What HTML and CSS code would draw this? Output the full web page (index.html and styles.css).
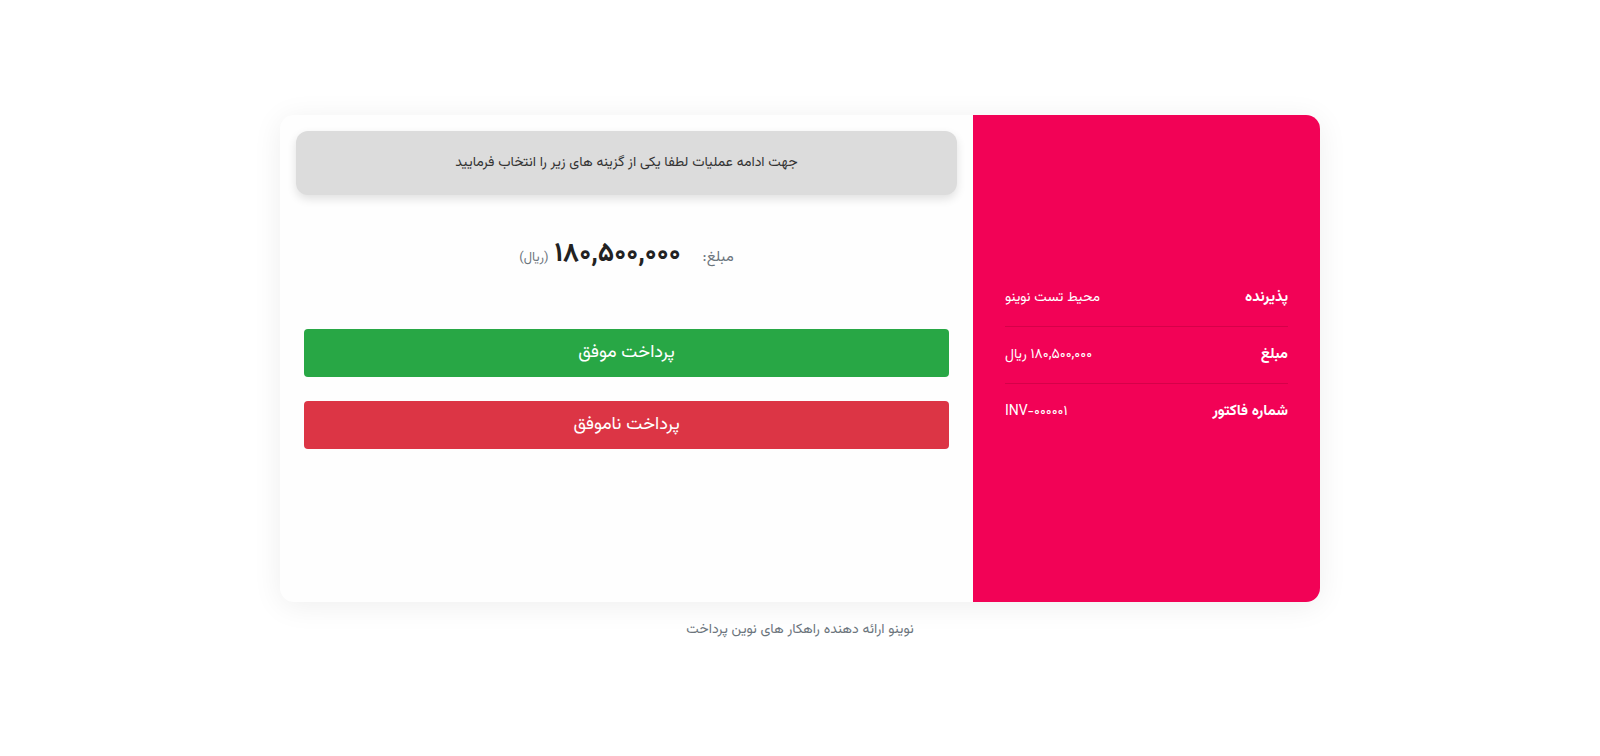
FILE: index.html
```html
<!DOCTYPE html>
<html lang="fa" dir="rtl">
<head>
<meta charset="utf-8">
<title>پرداخت</title>
<link rel="stylesheet" href="styles.css">
</head>
<body>
<div class="page">
  <div class="card">
    <aside class="info">
      <div class="info-row">
        <span class="info-label">پذیرنده</span>
        <span class="info-value">محیط تست نوینو</span>
      </div>
      <div class="info-row">
        <span class="info-label">مبلغ</span>
        <span class="info-value">۱۸۰,۵۰۰,۰۰۰ ریال</span>
      </div>
      <div class="info-row">
        <span class="info-label">شماره فاکتور</span>
        <span class="info-value" dir="ltr">INV-۰۰۰۰۰۱</span>
      </div>
    </aside>
    <main class="main">
      <div class="notice">جهت ادامه عملیات لطفا یکی از گزینه های زیر را انتخاب فرمایید</div>
      <div class="amount">
        <span class="amount-label">مبلغ:</span>
        <span class="amount-value">۱۸۰,۵۰۰,۰۰۰</span>
        <span class="amount-unit">(ریال)</span>
      </div>
      <div class="actions">
        <button class="btn btn-success" type="button">پرداخت موفق</button>
        <button class="btn btn-danger" type="button">پرداخت ناموفق</button>
      </div>
    </main>
  </div>
  <p class="footer">نوینو ارائه دهنده راهکار های نوین پرداخت</p>
</div>
</body>
</html>
```
FILE: styles.css
```css
* { box-sizing: border-box; }
html, body {
  margin: 0;
  padding: 0;
  background: #ffffff;
}
body {
  font-family: "Vazirmatn", "Noto Sans Arabic", "DejaVu Sans", sans-serif;
  color: #333;
}
.page {
  display: flex;
  flex-direction: column;
  align-items: center;
  padding-top: 115px;
}
.card {
  width: 1040px;
  height: 487px;
  display: flex;
  background: #fefefe;
  border-radius: 14px;
  box-shadow: 0 4px 30px rgba(0, 0, 0, 0.07);
}
.info {
  width: 347px;
  flex: none;
  background: #f20256;
  border-radius: 0 14px 14px 0;
  padding: 0 32px 7px;
  display: flex;
  flex-direction: column;
  justify-content: center;
  color: #fff;
}
.info-row {
  display: flex;
  justify-content: space-between;
  align-items: center;
  padding: 16px 0;
  line-height: 24px;
}
.info-row + .info-row {
  border-top: 1px solid rgba(160, 0, 50, 0.35);
}
.info-label {
  font-weight: 700;
  font-size: 15px;
}
.info-value {
  font-size: 14px;
}
.main {
  flex: 1;
  padding: 16px;
  display: flex;
  flex-direction: column;
}
.notice {
  height: 64px;
  background: #dcdcdc;
  border-radius: 12px;
  box-shadow: 0 4px 10px rgba(0, 0, 0, 0.12);
  display: flex;
  align-items: center;
  justify-content: center;
  font-size: 14px;
  color: #333;
}
.amount {
  margin-top: 38px;
  display: flex;
  justify-content: center;
  align-items: baseline;
  gap: 6px;
  height: 36px;
}
.amount-label {
  font-size: 15px;
  color: #6c757d;
  margin-left: 16px;
}
.amount-value {
  font-size: 27px;
  font-weight: 700;
  color: #222;
}
.amount-unit {
  font-size: 13px;
  color: #6c757d;
}
.actions {
  margin-top: 60px;
  padding: 0 8px;
  display: flex;
  flex-direction: column;
  gap: 24px;
}
.btn {
  height: 48px;
  border: none;
  border-radius: 4px;
  color: #fff;
  font-family: inherit;
  font-size: 18px;
}
.btn-success { background: #28a745; }
.btn-danger { background: #dc3545; }
.footer {
  margin: 17px 0 0;
  font-size: 14px;
  line-height: 22px;
  color: #6c757d;
}
```
